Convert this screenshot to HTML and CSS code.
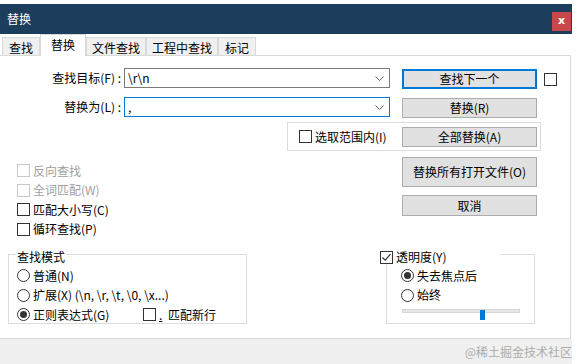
FILE: index.html
```html
<!DOCTYPE html>
<html lang="zh">
<head>
    <meta charset="UTF-8">
    <title>替换</title>
    <link rel="stylesheet" href="styles.css">
</head>
<body>
    <div class="dialog">
        <div class="titlebar">
            <span class="title">替换</span>
            <span class="close">x</span>
        </div>

        <div class="tabs">
            <span class="tab">查找</span>
            <span class="tab active">替换</span>
            <span class="tab">文件查找</span>
            <span class="tab">工程中查找</span>
            <span class="tab">标记</span>
        </div>

        <div class="panel">
            <div class="upper">
                <div class="main">
                    <div class="field">
                        <label class="field-label">查找目标(F) :</label>
                        <div class="combo">
                            <span>\r\n</span>
                            <svg width="9" height="5" viewBox="0 0 9 5"><polyline points="0.5,0.5 4.5,4.5 8.5,0.5" fill="none" stroke="#606060"/></svg>
                        </div>
                    </div>
                    <div class="field">
                        <label class="field-label">替换为(L) :</label>
                        <div class="combo focus">
                            <span>,</span>
                            <svg width="9" height="5" viewBox="0 0 9 5"><polyline points="0.5,0.5 4.5,4.5 8.5,0.5" fill="none" stroke="#606060"/></svg>
                        </div>
                    </div>

                    <div class="options">
                        <div class="opt disabled"><span class="check"></span>反向查找</div>
                        <div class="opt disabled"><span class="check"></span>全词匹配(W)</div>
                        <div class="opt"><span class="check"></span>匹配大小写(C)</div>
                        <div class="opt"><span class="check"></span>循环查找(P)</div>
                    </div>
                </div>

                <div class="side">
                    <div class="btn default">查找下一个</div>
                    <div class="btn">替换(R)</div>
                    <div class="btn">全部替换(A)</div>
                    <div class="btn tall">替换所有打开文件(O)</div>
                    <div class="btn cancel">取消</div>
                </div>

                <span class="check pin"></span>
            </div>

            <div class="selection"><span class="check"></span>选取范围内(I)</div>

            <div class="lower">
                <div class="group mode">
                    <span class="group-title">查找模式</span>
                    <div class="opt"><span class="radio"></span>普通(N)</div>
                    <div class="opt"><span class="radio"></span>扩展(X) (\n, \r, \t, \0, \x...)</div>
                    <div class="opt">
                        <span class="opt-item regex"><span class="radio on"></span>正则表达式(G)</span>
                        <span class="opt-item"><span class="check"></span><u>.</u>&nbsp;匹配新行</span>
                    </div>
                </div>

                <div class="group alpha">
                    <span class="group-title">
                        <span class="check">
                            <svg width="11" height="11" viewBox="0 0 11 11"><polyline points="1.5,5.5 4.2,8.2 9.5,2.2" fill="none" stroke="#333" stroke-width="1.2"/></svg>
                        </span>透明度(Y)
                    </span>
                    <div class="opt"><span class="radio on"></span>失去焦点后</div>
                    <div class="opt"><span class="radio"></span>始终</div>
                    <div class="slider">
                        <div class="track"></div>
                        <span class="thumb"></span>
                    </div>
                </div>
            </div>
        </div>

        <div class="footer">
            <span class="mark">@稀土掘金技术社区</span>
        </div>
    </div>
</body>
</html>
```

FILE: styles.css
```css
* {
    margin: 0;
    padding: 0;
    box-sizing: border-box;
}

body {
    background-color: #fff;
    font-family: "Noto Sans CJK SC", sans-serif;
    font-size: 12px;
    color: #000;
    line-height: 1;
}

.dialog {
    width: 572px;
    padding-top: 4px;
}

.titlebar {
    display: flex;
    justify-content: space-between;
    height: 30px;
    padding-left: 7px;
    background-color: #1c3e5c;
}

.title {
    color: #fff;
    line-height: 30px;
}

.close {
    width: 19px;
    height: 19px;
    margin: 8px 1px 0 0;
    background-color: #c8474b;
    color: #fff;
    font-family: "DejaVu Sans", sans-serif;
    font-size: 11px;
    font-weight: bold;
    line-height: 18px;
    text-align: center;
}

.tabs {
    display: flex;
    align-items: flex-end;
    height: 21px;
    padding-left: 2px;
}

.tab {
    min-width: 38px;
    height: 18px;
    padding: 0 5px;
    border: 1px solid #d9d9d9;
    border-bottom: none;
    background-color: #f0f0f0;
    text-align: center;
    line-height: 19px;
}

.tab.active {
    position: relative;
    z-index: 1;
    height: 22px;
    margin-bottom: -1px;
    padding: 0 10px;
    background-color: #fff;
    line-height: 20px;
}

.panel {
    position: relative;
    width: 571px;
    height: 284px;
    border: 1px solid #d9d9d9;
    border-left: none;
    background-color: #fff;
}

.upper {
    display: flex;
    padding-top: 12px;
}

.main {
    width: 402px;
}

.field {
    display: flex;
    align-items: center;
    height: 20px;
}

.field + .field {
    margin-top: 9px;
}

.field-label {
    width: 122px;
    padding-right: 1px;
    text-align: right;
}

.combo {
    display: flex;
    justify-content: space-between;
    align-items: center;
    width: 266px;
    height: 20px;
    margin-left: 2px;
    padding: 0 5px 0 3px;
    border: 1px solid #7a7a7a;
}

.combo.focus {
    border-color: #0078d7;
}

.options {
    margin-top: 44px;
    padding-left: 17px;
}

.opt {
    display: flex;
    align-items: center;
    gap: 3px;
    height: 19.5px;
}

.opt-item {
    display: flex;
    align-items: center;
    gap: 3px;
}

.opt-item.regex {
    width: 123px;
}

.opt.disabled {
    color: #a0a0a0;
}

.opt.disabled .check {
    border-color: #c8c8c8;
}

.check {
    display: inline-flex;
    align-items: center;
    justify-content: center;
    flex: none;
    width: 13px;
    height: 13px;
    border: 1px solid #333;
    background-color: #fff;
}

.radio {
    display: inline-flex;
    align-items: center;
    justify-content: center;
    flex: none;
    width: 13px;
    height: 13px;
    border: 1px solid #333;
    border-radius: 50%;
    background-color: #fff;
}

.radio.on::after {
    content: "";
    width: 7px;
    height: 7px;
    border-radius: 50%;
    background-color: #333;
}

.side {
    display: flex;
    flex-direction: column;
    width: 135px;
    padding-top: 1px;
}

.btn {
    position: relative;
    z-index: 1;
    display: flex;
    align-items: center;
    justify-content: center;
    height: 20px;
    margin-top: 9px;
    border: 1px solid #adadad;
    background-color: #e1e1e1;
}

.btn.default {
    margin-top: 0;
    border: 2px solid #0078d7;
}

.btn.tall {
    height: 30px;
    margin-top: 10px;
}

.btn.cancel {
    height: 21px;
    margin-top: 8px;
}

.pin {
    margin: 5px 0 0 7px;
}

/* frame sits under the button column */
.selection {
    position: absolute;
    left: 287px;
    top: 66px;
    display: flex;
    align-items: center;
    gap: 3px;
    width: 254px;
    height: 29px;
    padding-left: 11px;
    border: 1px solid #dcdcdc;
}

.lower {
    display: flex;
    align-items: flex-start;
    margin-top: 15px;
}

.group {
    position: relative;
    height: 70px;
    border: 1px solid #dcdcdc;
}

.group.mode {
    width: 239px;
    margin-left: 8px;
    padding: 11px 0 0 8px;
}

.group.alpha {
    width: 149px;
    margin-left: 139px;
    padding: 11px 0 0 14px;
}

.group-title {
    position: absolute;
    top: -5px;
    left: 7px;
    padding: 0 1px;
    background-color: #fff;
    line-height: 14px;
}

.alpha .group-title {
    left: -7px;
    display: flex;
    align-items: center;
    gap: 3px;
    width: 120px;
    padding: 0;
}

.slider {
    position: relative;
    width: 118px;
    height: 14px;
    margin: 1px 0 0 1px;
}

.track {
    height: 4px;
    margin-top: 4px;
    border: 1px solid #d6d6d6;
    background-color: #e7e7e7;
}

.thumb {
    position: absolute;
    left: 78px;
    top: 1px;
    width: 5px;
    height: 10px;
    background-color: #0078d7;
}

.footer {
    display: flex;
    justify-content: flex-end;
    align-items: center;
    width: 572px;
    height: 25px;
    background-color: #f0f0f0;
}

.mark {
    color: #acacac;
    font-size: 12px;
}
```
